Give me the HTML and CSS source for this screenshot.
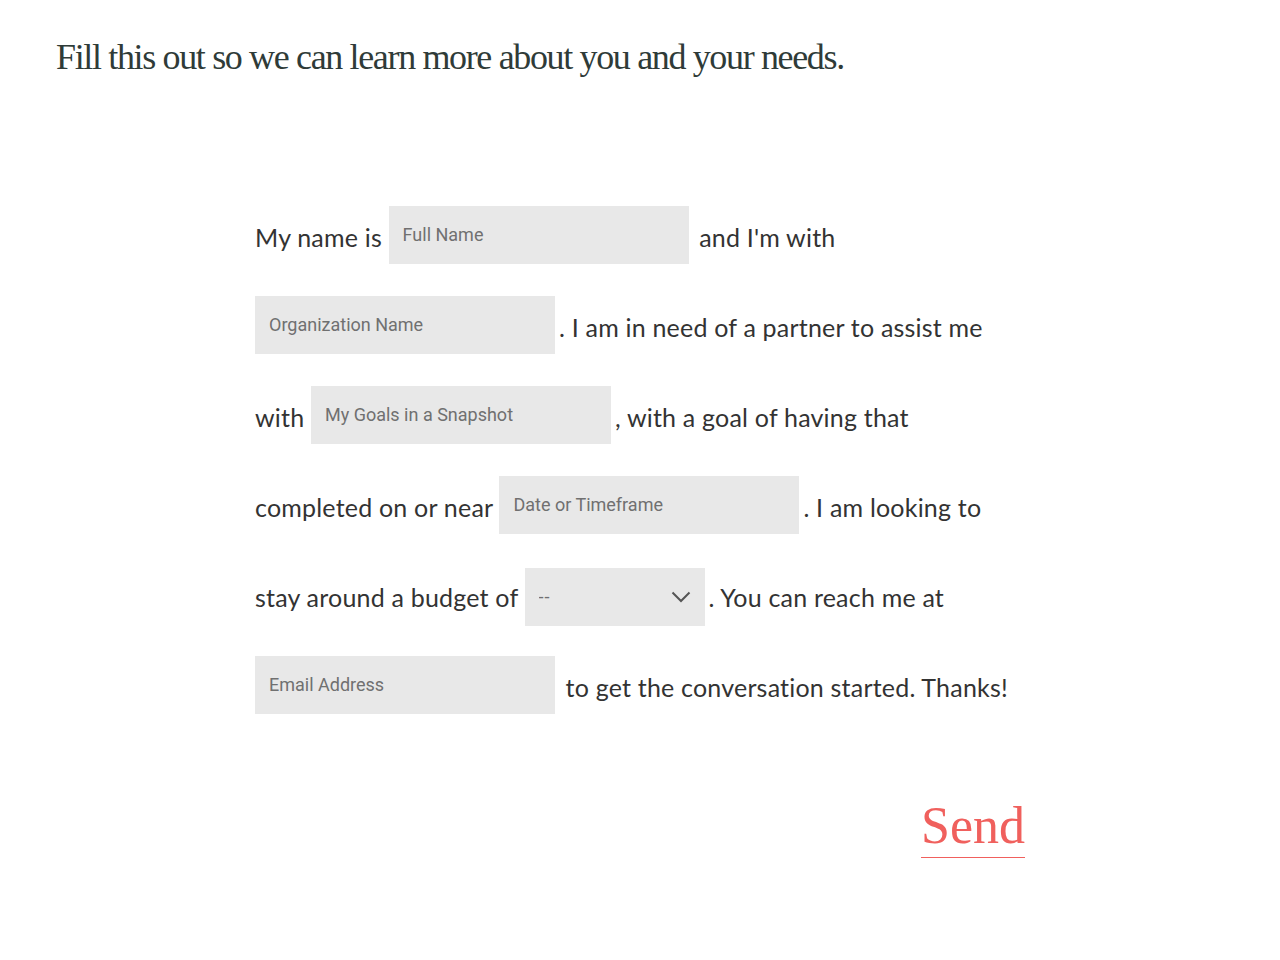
FILE: index.html
```html
<!DOCTYPE html>
<html lang="en">
<head>
    <meta charset="UTF-8">
    <meta name="viewport" content="width=device-width, initial-scale=1.0">
    <title>Contact</title>
    <link rel="stylesheet" href="styles.css">
</head>
<body>
    <div class="page">
        <h1 class="intro">Fill this out so we can learn more about you and your needs.</h1>

        <form class="madlib" onsubmit="return false;">
            <p class="madlib-text">My name is <input type="text" class="field" placeholder="Full Name"> and I'm with <input type="text" class="field" placeholder="Organization Name">. I am in need of a partner to assist me with <input type="text" class="field" placeholder="My Goals in a Snapshot">, with a goal of having that completed on or near <input type="text" class="field" placeholder="Date or Timeframe">. I am looking to stay around a budget of <span class="select-wrap"><select class="field field-select">
                    <option>--</option>
                    <option>Under $10k</option>
                    <option>$10k - $25k</option>
                    <option>$25k - $50k</option>
                    <option>$50k+</option>
                </select><svg class="chevron" width="20" height="12" viewBox="0 0 20 12"><path d="M1.5 1.5 L10 10 L18.5 1.5" fill="none" stroke="#555" stroke-width="2"/></svg></span>. You can reach me at <input type="email" class="field" placeholder="Email Address"> to get the conversation started. Thanks!</p>

            <div class="actions">
                <button type="submit" class="send">Send</button>
            </div>
        </form>
    </div>
</body>
</html>
```

FILE: styles.css
```css
body {
    margin: 0;
    background-color: #fff;
    color: #333;
    font-family: 'Lato', 'Open Sans', sans-serif;
}
.page {
    padding: 36px 56px 60px;
}
.intro {
    margin: 0;
    font-family: 'Liberation Serif', 'Times New Roman', serif;
    font-weight: normal;
    font-size: 36px;
    line-height: 1.2;
    letter-spacing: -1.35px;
    color: #2f3b38;
}
.madlib {
    width: 770px;
    margin: 113px 0 0 199px;
}
.madlib-text {
    max-width: 760px;
    margin: 0;
    font-size: 25px;
    line-height: 90px;
    letter-spacing: 0.2px;
    color: #333;
}
.field {
    width: 300px;
    height: 58px;
    margin-right: 4px;
    padding: 0 14px;
    border: none;
    border-radius: 0;
    background-color: #e8e8e8;
    font-family: 'Roboto', sans-serif;
    font-size: 18px;
    letter-spacing: 0;
    color: #333;
    box-sizing: border-box;
    vertical-align: 6px;
    outline: none;
}
.field::placeholder {
    color: #707070;
}
.select-wrap {
    position: relative;
    display: inline-block;
    vertical-align: 4px;
    line-height: normal;
    margin-right: 4px;
}
.field-select {
    width: 180px;
    margin: 0;
    color: #707070;
    letter-spacing: 1px;
    appearance: none;
    -webkit-appearance: none;
    cursor: pointer;
    vertical-align: baseline;
}
.chevron {
    position: absolute;
    right: 14px;
    top: 23px;
    pointer-events: none;
}
.actions {
    display: flex;
    justify-content: flex-end;
    margin-top: 68px;
}
.send {
    padding: 0 0 5px;
    border: none;
    border-bottom: 1px solid #f0605d;
    background: none;
    font-family: 'Liberation Serif', 'Times New Roman', serif;
    font-size: 52px;
    line-height: 1;
    color: #f0605d;
    cursor: pointer;
}
```
